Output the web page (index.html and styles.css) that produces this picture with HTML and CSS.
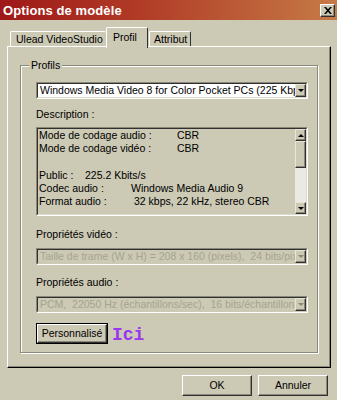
FILE: index.html
```html
<!DOCTYPE html>
<html lang="fr">
<head>
<meta charset="utf-8">
<title>Options de modèle</title>
<link rel="stylesheet" href="styles.css">
</head>
<body>
<div class="window">
  <div class="titlebar">
    <span class="title">Options de modèle</span>
    <span class="close"><svg width="8" height="7" viewBox="0 0 8 7"><path d="M0 0h2l2 2.2L6 0h2L5 3.5 8 7H6L4 4.8 2 7H0l3-3.5z" fill="#000"/></svg></span>
  </div>
  <div class="tabs">
    <div class="tab tab-ulead">Ulead VideoStudio</div>
    <div class="tab tab-profil active">Profil</div>
    <div class="tab tab-attr">Attribut</div>
  </div>
  <div class="panel">
    <div class="group">
      <span class="legend">Profils</span>
      <div class="combo">
        <div class="combo-inner">
          <div class="combo-text">Windows Media Video 8 for Color Pocket PCs (225 Kbps)</div>
          <div class="arrow-btn"><span class="tri-down"></span></div>
        </div>
      </div>
      <div class="label label-desc">Description :</div>
      <div class="desc">
        <div class="desc-inner">
          <div class="desc-text">
            <div class="row"><span class="key k138">Mode de codage audio :</span><span>CBR</span></div>
            <div class="row"><span class="key k138">Mode de codage vidéo :</span><span>CBR</span></div>
            <div class="row">&nbsp;</div>
            <div class="row"><span class="key k46">Public :</span><span>225.2 Kbits/s</span></div>
            <div class="row"><span class="key k92">Codec audio :</span><span>Windows Media Audio 9</span></div>
            <div class="row"><span class="key k95">Format audio :</span><span>32 kbps, 22 kHz, stereo CBR</span></div>
          </div>
          <div class="scrollbar">
            <div class="arrow-btn sb-btn"><span class="tri-up"></span></div>
            <div class="sb-thumb"></div>
            <div class="sb-track"></div>
            <div class="arrow-btn sb-btn"><span class="tri-down"></span></div>
          </div>
        </div>
      </div>
      <div class="label label-video">Propriétés vidéo :</div>
      <div class="combo disabled">
        <div class="combo-inner">
          <div class="combo-text">Taille de trame (W x H) = 208 x 160 (pixels),&nbsp; 24 bits/pixel</div>
          <div class="arrow-btn"><span class="tri-down"></span></div>
        </div>
      </div>
      <div class="label label-audio">Propriétés audio :</div>
      <div class="combo disabled">
        <div class="combo-inner">
          <div class="combo-text">PCM,&nbsp; 22050 Hz (échantillons/sec),&nbsp; 16 bits/échantillon, stéréo</div>
          <div class="arrow-btn"><span class="tri-down"></span></div>
        </div>
      </div>
      <div class="custom-row">
        <div class="btn default"><span class="btn-face">Personnalisé</span></div>
        <span class="ici">Ici</span>
      </div>
    </div>
  </div>
  <div class="footer">
    <div class="btn"><span class="btn-face">OK</span></div>
    <div class="btn"><span class="btn-face">Annuler</span></div>
  </div>
</div>
</body>
</html>
```
FILE: styles.css
```css
* { box-sizing: border-box; }
html, body { margin: 0; padding: 0; }
body {
  width: 337px;
  height: 400px;
  overflow: hidden;
  background: #ccc9b4;
  font-family: "Liberation Sans", Arial, sans-serif;
  font-size: 10.5px;
  color: #000;
}
.window {
  width: 337px;
  height: 400px;
  display: flex;
  flex-direction: column;
  background: #ccc9b4;
}
.titlebar {
  height: 20px;
  flex: none;
  background: linear-gradient(to right, #9e1818 0%, #b03a26 40%, #c67a46 100%);
  display: flex;
  align-items: center;
  justify-content: space-between;
  padding: 0 2px 0 3px;
}
.title {
  color: #fff;
  font-weight: bold;
  font-size: 13px;
  letter-spacing: 0.1px;
}
.close {
  width: 15px;
  height: 13px;
  background: #ccc9b4;
  border: 1px solid;
  border-color: #fff #303030 #303030 #fff;
  box-shadow: inset -1px -1px 0 #8a8878;
  display: flex;
  align-items: center;
  justify-content: center;
}

/* Tabs */
.tabs {
  flex: none;
  height: 19px;
  margin-top: 7px;
  padding-left: 10px;
  display: flex;
  align-items: flex-end;
  position: relative;
  z-index: 1;
}
.tab {
  height: 15px;
  display: flex;
  align-items: center;
  background: #ccc9b4;
  border-top: 1px solid #fff;
  border-left: 1px solid #fff;
  border-right: 1px solid #303030;
  border-radius: 2px 2px 0 0;
  white-space: nowrap;
}
.tab-ulead { width: 96px; padding-left: 5px; border-right: none; }
.tab-profil { width: 42px; padding-left: 6px; }
.tab-attr { width: 42px; padding-left: 4px; margin-left: 1px; }
.tab.active {
  height: 21px;
  margin-bottom: -2px;
  padding-bottom: 3px;
}

/* Panel */
.panel {
  flex: none;
  height: 322px;
  margin: 0 6px 0 7px;
  border: 1px solid;
  border-color: #fff #000 #000 #fff;
  box-shadow: inset -1px -1px 0 #8a8878;
  padding: 18px 12px 0 12px;
}
.group {
  position: relative;
  height: 288px;
  border: 1px solid #8a8878;
  box-shadow: inset 1px 1px 0 #fff, 1px 1px 0 #fff;
  padding: 16px 9px 0 15px;
  display: flex;
  flex-direction: column;
}
.legend {
  position: absolute;
  top: -8px;
  left: 8px;
  padding: 0 2px;
  background: #ccc9b4;
  line-height: 14px;
}

/* Combo */
.combo {
  flex: none;
  height: 17px;
  display: flex;
  border: 1px solid;
  border-color: #8a8878 #fff #fff #8a8878;
}
.label + .combo { margin-top: 7px; }
.combo-inner {
  flex: 1;
  display: flex;
  min-width: 0;
  border: 1px solid;
  border-color: #303030 #dcdac8 #dcdac8 #303030;
  background: #fff;
}
.combo-text {
  flex: 1;
  min-width: 0;
  overflow: hidden;
  white-space: nowrap;
  padding-left: 2px;
  line-height: 13px;
}
.combo.disabled .combo-inner {
  background: #ccc9b4;
  border-color: #303030 #ccc9b4 #ccc9b4 #303030;
}
.combo.disabled .combo-text { color: #a6a490; }

.arrow-btn {
  flex: none;
  width: 11px;
  height: 13px;
  background: #ccc9b4;
  border: 1px solid;
  border-color: #e8e6d8 #303030 #303030 #e8e6d8;
  box-shadow: inset -1px -1px 0 #8a8878;
  display: flex;
  align-items: center;
  justify-content: center;
}
.tri-down, .tri-up {
  width: 0;
  height: 0;
  border-left: 3px solid transparent;
  border-right: 3px solid transparent;
}
.tri-down { border-top: 3px solid #000; }
.tri-up { border-bottom: 3px solid #000; }
.combo.disabled .tri-down { border-top-color: #8a8878; }

/* Labels */
.label {
  flex: none;
  line-height: 13px;
  height: 13px;
}
.label-desc { margin-top: 9px; }
.label-video { margin-top: 12px; }
.label-audio { margin-top: 11px; }

/* Description */
.desc {
  flex: none;
  margin-top: 6px;
  height: 89px;
  border: 1px solid;
  border-color: #8a8878 #fff #fff #8a8878;
}
.desc-inner {
  height: 100%;
  display: flex;
  border: 1px solid;
  border-color: #303030 #dcdac8 #dcdac8 #303030;
  background: #ccc9b4;
}
.desc-text {
  flex: 1;
  padding: 0 0 0 1px;
  line-height: 13.3px;
  white-space: nowrap;
  overflow: hidden;
}
.row { height: 13.3px; }
.key { display: inline-block; }
.k138 { width: 138px; }
.k46 { width: 46px; }
.k92 { width: 92px; }
.k95 { width: 95px; }

.scrollbar {
  flex: none;
  width: 11px;
  display: flex;
  flex-direction: column;
}
.sb-btn { height: 12px; width: 11px; }
.sb-thumb {
  flex: none;
  height: 27px;
  background: #ccc9b4;
  border: 1px solid;
  border-color: #e8e6d8 #303030 #303030 #e8e6d8;
  box-shadow: inset -1px -1px 0 #8a8878;
}
.sb-track {
  flex: 1;
  background: #ebeae2;
}

/* Buttons */
.custom-row {
  flex: none;
  margin-top: 10px;
  display: flex;
  align-items: center;
}
.btn {
  flex: none;
  height: 21px;
  border: 1px solid;
  border-color: #fff #303030 #303030 #fff;
  box-shadow: inset -1px -1px 0 #8a8878;
  display: flex;
}
.btn.default {
  width: 72px;
  border: 1px solid #000;
  box-shadow: none;
}
.btn-face {
  flex: 1;
  display: flex;
  align-items: center;
  justify-content: center;
  line-height: 13px;
}
.btn.default .btn-face {
  border: 1px solid;
  border-color: #fff #303030 #303030 #fff;
  box-shadow: inset -1px -1px 0 #8a8878;
}
.ici {
  margin-left: 4px;
  font-family: "Liberation Mono", "Courier New", monospace;
  font-weight: bold;
  font-size: 18px;
  color: #9a35f0;
  line-height: 18px;
  padding-top: 3px;
}

.footer {
  flex: none;
  margin-top: 7px;
  display: flex;
  justify-content: flex-end;
  gap: 6px;
  padding-right: 9px;
}
.footer .btn { width: 70px; }
```
